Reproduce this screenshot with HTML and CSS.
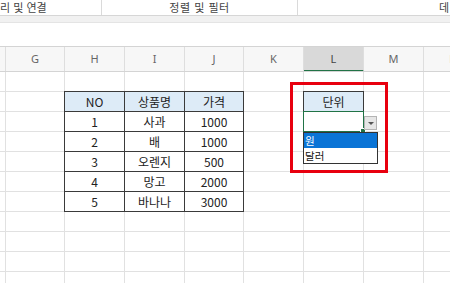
FILE: index.html
```html
<!DOCTYPE html>
<html lang="ko">

<head>
    <meta charset="UTF-8">
    <meta name="viewport" content="width=device-width, initial-scale=1.0">
    <title>데이터 유효성 검사</title>
    <link rel="stylesheet" href="styles.css">
</head>

<body>
    <div class="ribbon">
        <div class="group group-query"><span>리 및 연결</span></div>
        <div class="group group-sort"><span>정렬 및 필터</span></div>
        <div class="group group-data"><span>데</span></div>
    </div>
    <div class="ribbon-foot"></div>
    <div class="formula-bar"></div>

    <div class="col-heads">
        <div class="col-head"></div>
        <div class="col-head">G</div>
        <div class="col-head">H</div>
        <div class="col-head">I</div>
        <div class="col-head">J</div>
        <div class="col-head">K</div>
        <div class="col-head active">L</div>
        <div class="col-head">M</div>
        <div class="col-head">N</div>
    </div>

    <div class="sheet">
        <div class="col-line c1"></div>
        <div class="col-line c2"></div>
        <div class="col-line c3"></div>
        <div class="col-line c4"></div>
        <div class="col-line c5"></div>
        <div class="col-line c6"></div>
        <div class="col-line c7"></div>
        <div class="col-line c8"></div>
        <div class="col-line c9"></div>

        <div class="data-table">
            <div class="cell head">NO</div>
            <div class="cell head">상품명</div>
            <div class="cell head">가격</div>
            <div class="cell">1</div>
            <div class="cell">사과</div>
            <div class="cell">1000</div>
            <div class="cell">2</div>
            <div class="cell">배</div>
            <div class="cell">1000</div>
            <div class="cell">3</div>
            <div class="cell">오렌지</div>
            <div class="cell">500</div>
            <div class="cell">4</div>
            <div class="cell">망고</div>
            <div class="cell">2000</div>
            <div class="cell">5</div>
            <div class="cell">바나나</div>
            <div class="cell">3000</div>
        </div>

        <div class="unit-head">단위</div>
        <div class="unit-cell">
            <span class="fill-handle"></span>
            <span class="drop-btn"><span class="arrow"></span></span>
            <ul class="drop-list">
                <li class="selected">원</li>
                <li>달러</li>
            </ul>
        </div>

        <div class="highlight-box"></div>
    </div>
</body>

</html>
```

FILE: styles.css
```css
body {
    font-family: 'Noto Sans CJK KR', 'Noto Sans', sans-serif;
    margin: 0;
    padding: 0;
    overflow: hidden;
    background-color: #FFF;
    width: 450px;
    height: 283px;
    color: #222;
}

.ribbon {
    display: flex;
    height: 15px;
    border-bottom: 1px solid #d6d6d6;
    background-color: #FFF;
    font-size: 11px;
    color: #444;
    line-height: 15px;
    white-space: nowrap;
}

.group {
    box-sizing: border-box;
}

.group-query {
    width: 102px;
    border-right: 1px solid #dadada;
}

.group-sort {
    width: 196px;
    text-align: center;
    border-right: 1px solid #dadada;
    letter-spacing: 0.5px;
}

.group-data {
    flex: 1;
    text-align: right;
    padding-right: 1px;
}

.ribbon-foot {
    height: 6px;
    background-color: #f1f1f1;
    border-bottom: 1px solid #e4e4e4;
}

.formula-bar {
    height: 23px;
    background-color: #FFF;
    border-bottom: 1px solid #d4d4d4;
}

.col-heads {
    display: grid;
    grid-template-columns: 6px 59px 60px 60px 59px 60px 60px 60px 60px;
    height: 24px;
    border-bottom: 1px solid #d4d4d4;
    background-color: #f7f7f7;
    overflow: hidden;
}

.col-head {
    box-sizing: border-box;
    border-right: 1px solid #dedede;
    font-family: 'Noto Sans', sans-serif;
    font-size: 11px;
    color: #666;
    text-align: center;
    line-height: 24px;
}

.col-head.active {
    background-color: #d9d9d9;
    border-bottom: 2px solid #217346;
    line-height: 23px;
    color: #444;
}

.sheet {
    position: relative;
    display: grid;
    grid-template-columns: 6px 59px 60px 60px 59px 60px 60px 60px 60px;
    grid-template-rows: repeat(11, 20px);
    background-image: repeating-linear-gradient(to bottom, transparent 0, transparent 19px, #e1e1e1 19px, #e1e1e1 20px);
}

.col-line {
    grid-row: 1 / -1;
    border-right: 1px solid #e1e1e1;
}

.c1 { grid-column: 1; }
.c2 { grid-column: 2; }
.c3 { grid-column: 3; }
.c4 { grid-column: 4; }
.c5 { grid-column: 5; }
.c6 { grid-column: 6; }
.c7 { grid-column: 7; }
.c8 { grid-column: 8; }
.c9 { grid-column: 9; }

.data-table {
    grid-column: 3 / 6;
    grid-row: 2 / 8;
    display: grid;
    grid-template-columns: 60px 60px 59px;
    grid-template-rows: repeat(6, 20px);
    margin: -1px 0 0 -1px;
    border-left: 1px solid #3a3a3a;
    border-top: 1px solid #3a3a3a;
    background-color: #FFF;
    z-index: 1;
}

.cell {
    box-sizing: border-box;
    border-right: 1px solid #3a3a3a;
    border-bottom: 1px solid #3a3a3a;
    font-size: 12px;
    line-height: 19px;
    text-align: center;
    color: #222;
}

.cell.head {
    background-color: #ddebf7;
}

.unit-head {
    grid-column: 7;
    grid-row: 2;
    margin: -1px 0 0 -1px;
    border: 1px solid #3a3a3a;
    background-color: #ddebf7;
    font-size: 12px;
    line-height: 19px;
    text-align: center;
    z-index: 1;
}

.unit-cell {
    grid-column: 7;
    grid-row: 3;
    position: relative;
    margin: -1px 0 0 -1px;
    border: 1px solid #217346;
    background-color: #FFF;
    z-index: 2;
}

.fill-handle {
    position: absolute;
    right: -3px;
    bottom: -3px;
    width: 4px;
    height: 4px;
    background-color: #217346;
    border: 1px solid #FFF;
}

.drop-btn {
    position: absolute;
    left: 100%;
    top: 4px;
    margin-left: 1px;
    box-sizing: border-box;
    width: 13px;
    height: 14px;
    background-color: #e6e6e6;
    border: 1px solid #b4b4b4;
    display: flex;
    align-items: center;
    justify-content: center;
}

.arrow {
    width: 0;
    height: 0;
    border-left: 3px solid transparent;
    border-right: 3px solid transparent;
    border-top: 3px solid #555;
}

.drop-list {
    position: absolute;
    top: 100%;
    left: -1px;
    margin: 1px 0 0 0;
    padding: 0;
    list-style: none;
    box-sizing: border-box;
    width: 75px;
    border: 1px solid #333;
    background-color: #FFF;
    font-size: 10.5px;
    z-index: 3;
}

.drop-list li {
    height: 15px;
    line-height: 15px;
    padding-left: 1px;
    color: #111;
    overflow: hidden;
}

.drop-list li.selected {
    background-color: #0a74d6;
    color: #FFF;
}

.highlight-box {
    position: absolute;
    left: 290px;
    top: 10px;
    width: 92px;
    height: 85px;
    border: 3px solid #e8000f;
    z-index: 4;
}
```
